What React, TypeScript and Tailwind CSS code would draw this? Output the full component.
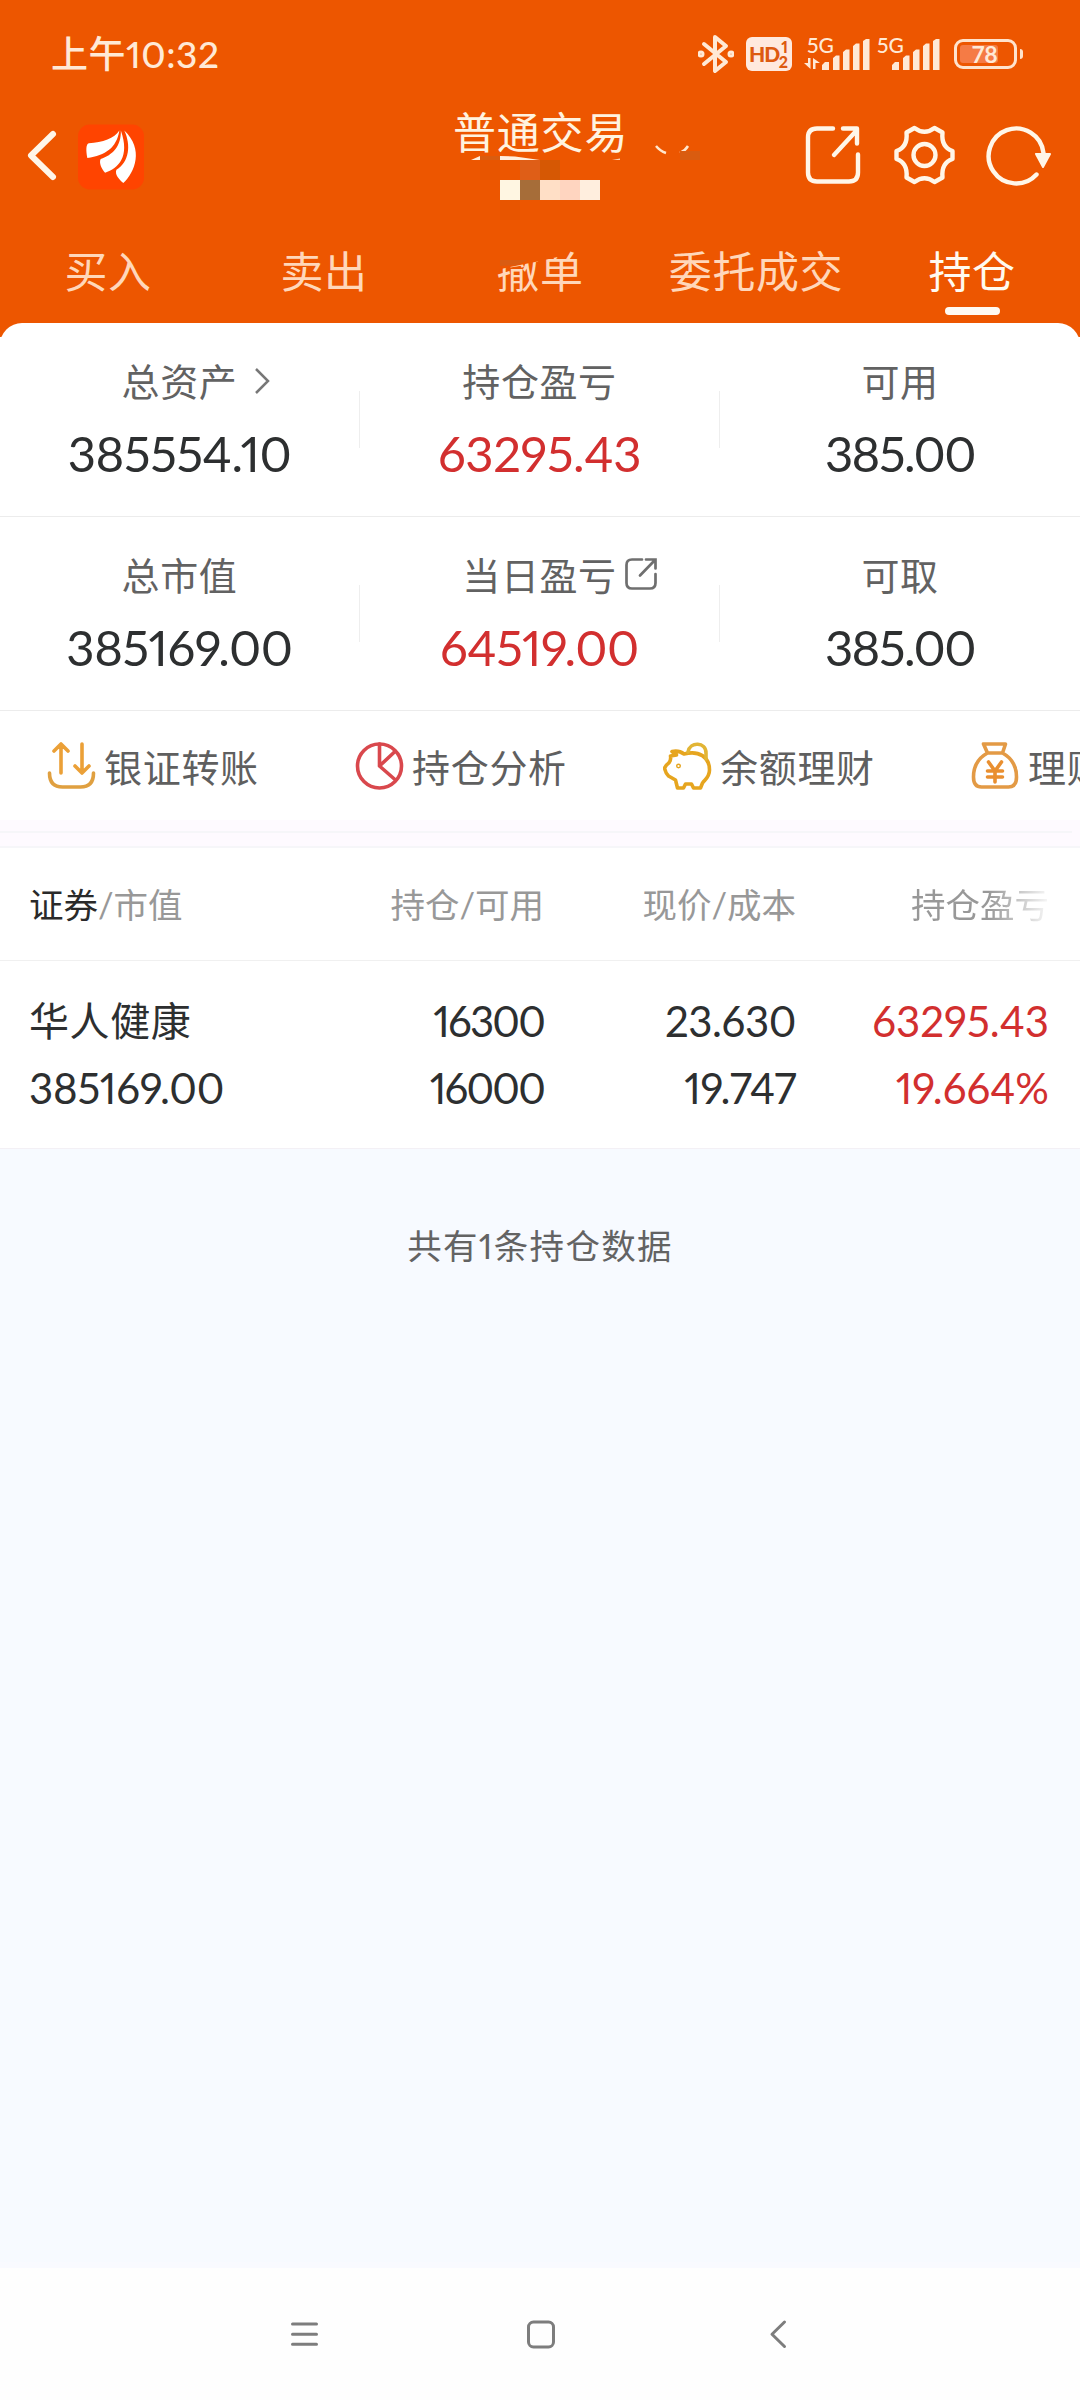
import { clsx } from 'clsx';
import type { ReactNode } from 'react';

const CREAM = '#fff6e8';

function SignalBars() {
  return (
    <svg width="48" height="31" viewBox="0 0 48 31" fill="#ffe9d6">
      <path d="M0 31v-5l3-3h4v8zM11 31V19l3-2.500h3.500V31zM21 31V13l3-2.500h3.500V31zM31 31V7l3-2.500h3.500V31zM41 31V2l3-2h3.500v31z" />
    </svg>
  );
}

function Signal({ arrows = false }: { arrows?: boolean }) {
  return (
    <div className="relative h-[36px] w-[66px]">
      <span className="absolute left-[3px] top-0 text-[21px] font-medium leading-[18px]">5G</span>
      {arrows && (
        <svg className="absolute bottom-[3px] left-0" width="16" height="11" viewBox="0 0 16 11" fill="#ffe9d6">
          <path d="M4 0h2.500v11L0 5h4zM9 0v11h2.500V5H16z" />
        </svg>
      )}
      <div className="absolute bottom-[2px] left-[18px]">
        <SignalBars />
      </div>
    </div>
  );
}

function StatusBar() {
  return (
    <div className="flex h-[108px] items-center pl-[51px] pr-[57px] text-[#ffe9d6]">
      <span className="text-[37px] font-medium leading-[40px] tracking-[0.5px]">上午10:32</span>
      <svg className="ml-auto" width="36" height="40" viewBox="0 0 36 40" fill="none" stroke="#ffe9d6" strokeWidth="4" strokeLinejoin="round" strokeLinecap="round">
        <path d="M6 10l22 18-11 9V3l11 9L6 30" />
        <circle cx="3" cy="20" r="1.500" />
        <circle cx="33" cy="20" r="1.500" />
      </svg>
      <div className="relative ml-[12px] h-[34px] w-[46px] rounded-[6px] bg-[#ffe9de] text-[#dd5a10]">
        <span className="absolute left-[3px] top-[8px] text-[21px] font-black leading-[18px] tracking-[-1px]">HD</span>
        <span className="absolute right-[4px] top-[3px] text-[16px] font-black leading-[14px]">1</span>
        <span className="absolute bottom-[2px] right-[4px] text-[16px] font-black leading-[14px]">2</span>
      </div>
      <div className="ml-[12px] flex gap-[4px]">
        <Signal arrows />
        <Signal />
      </div>
      <div className="ml-[14px] flex h-[30px] w-[63px] rounded-[9px] border-[3px] border-[#ffe3cc] p-[3px]">
        <div className="flex w-[38px] items-center rounded-[3px] bg-[#f57b45] pl-[12px] text-[23px] font-bold leading-[18px]">
          78
        </div>
      </div>
      <div className="ml-[3px] h-[10px] w-[3px] rounded-r-[3px] bg-[#ffe3cc]" />
    </div>
  );
}

function TitleBar() {
  return (
    <div className="relative flex h-[107px] items-start">
      <svg className="ml-[24px] mt-[20px]" width="36" height="54" viewBox="0 0 36 54" fill="none" stroke={CREAM} strokeWidth="6" strokeLinecap="round" strokeLinejoin="round">
        <path d="M29 6L7 27.500 29 49" />
      </svg>
      <svg className="ml-[18px] mt-[16px]" width="66" height="66" viewBox="0 0 67 66">
        <rect width="67" height="66" rx="12" fill="#ff4400" />
        <g fill="#fff">
          <path d="M42 6C37 14 25 18 11 19C8 20 8 26 9.500 34C28 31 39 24 42 6z" />
          <path d="M43.500 6C44 22 35 31 23 35C21 39 24 45 27.500 49C41 44 53 33 43.500 6z" />
          <path d="M47 6C54 21 52 38 39 46C37 51 42 56 46 59.500C58 48 67 25 47 6z" />
        </g>
      </svg>
      <span className="absolute left-[453px] top-[1px] text-[43px] leading-[48px] tracking-[0.8px] text-[#fff3e0]">普通交易</span>
      {/* account switcher with the number pixelated out */}
      <svg className="absolute left-[470px] top-[36px]" width="232" height="90" viewBox="470 144 232 90">
        <path d="M656 146q4 5 10 7M680 153q5-2 8-7" fill="none" stroke="#ffe6cc" strokeWidth="2.500" />
        <path d="M680 151h20v9h-20zM480 156h20v4h-20z" fill="#d95c10" />
        <path d="M471 160l9-4v4zM500 156l15 .5 25 3.500h-40z" fill="#fff0df" />
        <path d="M612 160l8-1.500v1.500z" fill="#ffd0b0" />
        <path d="M480 160h20v20h-20zM500 200h20v20h-20z" fill="#e85500" />
        <path d="M520 160h20v20h-20z" fill="#df5e17" />
        <path d="M540 160h20v20h-20z" fill="#d65804" />
        <path d="M500 180h20v20h-20z" fill="#fff6e2" />
        <path d="M520 180h20v20h-20z" fill="#a66d39" />
        <path d="M540 180h20v20h-20z" fill="#ffdfc6" />
        <path d="M560 180h20v20h-20z" fill="#ffd5c0" />
        <path d="M580 180h20v20h-20z" fill="#ffeede" />
      </svg>
      <svg className="ml-auto mr-[24px] mt-[12px]" width="252" height="70" viewBox="804 120 252 70" fill="none" stroke={CREAM} strokeWidth="4.400" strokeLinecap="round" strokeLinejoin="round">
        <path d="M833 128.500h-16q-9 0-9 9v35q0 9 9 9h32q9 0 9-9v-18M843 128.500h14v15M857 130l-23 25" />
        <circle cx="924.500" cy="155" r="11" />
        <path d="M914.500 128q10 7.500 20 0l8 4.500q-1.500 14.500 10 18.500v8q-11.500 4-10 18.500l-8 4.500q-10-7.500-20 0l-8-4.500q1.500-14.500-10-18.500v-8q11.500-4 10-18.500z" />
        <path d="M1036.500 174.500A27.500 27.500 0 1 1 1043.500 153" />
        <path d="M1036 154h14l-7 13z" fill={CREAM} strokeWidth="2" />
      </svg>
    </div>
  );
}

const tabs = ['买入', '卖出', '撤单', '委托成交', '持仓'];

function Tabs() {
  return (
    <div className="grid h-[108px] grid-cols-5 pt-[32px]">
      {tabs.map((tab) => (
        <div
          key={tab}
          className={clsx(
            'relative flex flex-col items-center text-[43px] leading-[50px] tracking-[0.6px]',
            tab === '持仓' ? 'text-[#fffaf0]' : 'text-[#ffd7ba]',
          )}
        >
          {tab}
          {tab === '持仓' && <div className="mt-[10px] h-[8px] w-[55px] rounded-full bg-[#fffaf3]" />}
          {/* smear left over the top of the label */}
          {tab === '撤单' && (
            <svg className="absolute left-[60px] top-0" width="80" height="24" viewBox="492 247 80 24">
              <path d="M492 247h70v9l-22 5-30 6-18 4z" fill="#ed5600" />
              <path d="M500 260h28l-10 5-18 1z" fill="#d95c12" />
            </svg>
          )}
        </div>
      ))}
    </div>
  );
}

interface StatProps {
  label: string;
  value: string;
  red?: boolean;
  icon?: ReactNode;
}

function Stat({ label, value, red, icon }: StatProps) {
  return (
    <div className="flex flex-col items-center pt-[34px]">
      <div className="relative text-[38px] leading-[48px] tracking-[0.6px] text-[#626262]">
        {label}
        {icon}
      </div>
      <div
        className={clsx(
          'mt-[18px] text-[49px] leading-[60px]',
          value === '385.00' ? 'tracking-[-1.5px]' : 'tracking-[-0.4px]',
          red ? 'text-[#d22f2f]' : 'text-[#2d2f30]',
        )}
      >
        {value}
      </div>
    </div>
  );
}

function StatRow({ stats }: { stats: StatProps[] }) {
  return (
    <div className="grid h-[194px] grid-cols-[359px_1px_359px_1px_360px] border-b border-[#ececec]">
      <Stat {...stats[0]} />
      <div className="mt-[68px] h-[57px] bg-[#eeeeee]" />
      <Stat {...stats[1]} />
      <div className="mt-[68px] h-[57px] bg-[#eeeeee]" />
      <Stat {...stats[2]} />
    </div>
  );
}

const chevron = (
  <svg className="absolute left-[132px] top-[10px]" width="18" height="28" viewBox="0 0 18 28" fill="none" stroke="#777" strokeWidth="2.500">
    <path d="M2 2l12 12L2 26" />
  </svg>
);

const openIcon = (
  <svg className="absolute left-[162px] top-[6px]" width="34" height="34" viewBox="0 0 34 34" fill="none" stroke="#6f6f6f" strokeWidth="2.700" strokeLinecap="round">
    <path d="M18 2.500H8Q2.500 2.500 2.500 8v18q0 5.500 5.500 5.500h18q5.500 0 5.500-5.500V17M22 2.500h9.500v9M31 3L16 18.500" />
  </svg>
);

const actions = [
  {
    label: '银证转账',
    icon: (
      <g stroke="#e0a040">
        <path d="M14 31V3M7 9l7-7 7 7M35 2v28M28 24l7 7 7-7" stroke="#eba037" />
        <path d="M2.500 31q0 14 13 14h18q13 0 13-14" />
      </g>
    ),
  },
  {
    label: '持仓分析',
    icon: (
      <g stroke="#d9484d">
        <circle cx="24.500" cy="24" r="22" />
        <path d="M24.500 2v22l16 14M24.500 24L40 9.500" />
      </g>
    ),
  },
  {
    label: '余额理财',
    icon: (
      <g stroke="#e6a51f">
        <path d="M13.500 13L9 9.500q7-1.500 12 2.500C36 8 46.500 15 46.500 28c0 7-4 9-7 13l-2 5h-7l-2-4h-6l-2 4h-6l-2-8-7-4q-3-3-4-8l2-3q5-3 4-9z" />
        <path d="M25 10c2-11 18-10 18 1v6" stroke="#e2b535" />
        <circle cx="15.500" cy="24" r=".7" />
      </g>
    ),
  },
  {
    label: '理财',
    icon: (
      <g stroke="#e39a45">
        <path d="M12.500 2h22l-3 9h-15zM16.500 11C5.500 17 2.500 26 2.500 35q0 10 8 10h27q8 0 8-10C45.500 26 42.500 17 31.500 11" />
        <path d="M17.500 20l6.500 9 6.500-9M16.500 29h15M16.500 35h15M24 29v11" stroke="#e98f30" />
      </g>
    ),
  },
];

function Actions() {
  return (
    <div className="flex h-[109px] overflow-hidden pl-[47px]">
      {actions.map(({ label, icon }) => (
        <div key={label} className="flex w-[308px] shrink-0 pt-[31px]">
          <svg width="49" height="48" viewBox="0 0 49 48" fill="none" strokeWidth="3.600" strokeLinecap="round" strokeLinejoin="round">
            {icon}
          </svg>
          <span className="ml-[8px] whitespace-nowrap text-[38px] leading-[50px] tracking-[0.7px] text-[#5f5f5f]">{label}</span>
        </div>
      ))}
    </div>
  );
}

function Cell({ top, bottom, className }: { top: string; bottom: string; className?: string }) {
  return (
    <div className={clsx('flex flex-col text-[42px] leading-[67px]', className)}>
      <span>{top}</span>
      <span>{bottom}</span>
    </div>
  );
}

function Holdings() {
  return (
    <div>
      <div className="grid h-[113px] grid-cols-[264px_251px_252px_253px] border-b border-[#f0f0f0] pl-[29px] pt-[32px] text-[34.500px] leading-[50px] text-[#989898]">
        <div>
          <span className="text-[#2a2a2a]">证券</span>/市值
        </div>
        <div className="text-right">持仓/可用</div>
        <div className="text-right">现价/成本</div>
        <div className="bg-linear-to-r from-[#989898] from-76% to-[#f8f8f8] bg-clip-text text-right text-transparent">持仓盈亏</div>
      </div>
      <div className="grid h-[188px] grid-cols-[264px_251px_252px_253px] border-b border-[#f3f0f5] pl-[29px] pt-[27px] text-[#2d2f30]">
        <div className="flex flex-col leading-[67px]">
          <span className="text-[40px] tracking-[0.6px]">华人健康</span>
          <span className="text-[42px] tracking-[-0.2px]">385169.00</span>
        </div>
        <Cell top="16300" bottom="16000" className="items-end tracking-[-1.800px]" />
        <Cell top="23.630" bottom="19.747" className="items-end tracking-[-0.4px]" />
        <Cell top="63295.43" bottom="19.664%" className="items-end text-[#d22f2f]" />
      </div>
    </div>
  );
}

export default function App() {
  return (
    <div className="flex h-[2400px] w-[1080px] flex-col overflow-hidden bg-[#f7faff] font-['Lato','Noto_Sans_CJK_SC',sans-serif] proportional-nums">
      <header className="bg-[#ed5600]">
        <StatusBar />
        <TitleBar />
        <Tabs />
      </header>
      <div className="bg-linear-to-b from-[#ed5600] from-[14px] to-white to-[14px]">
        <div className="rounded-t-[22px] bg-white">
          <StatRow
            stats={[
              { label: '总资产', value: '385554.10', icon: chevron },
              { label: '持仓盈亏', value: '63295.43', red: true },
              { label: '可用', value: '385.00' },
            ]}
          />
          <StatRow
            stats={[
              { label: '总市值', value: '385169.00' },
              { label: '当日盈亏', value: '64519.00', red: true, icon: openIcon },
              { label: '可取', value: '385.00' },
            ]}
          />
          <Actions />
          <div className="h-[28px] border-b-2 border-[#f6f6f9] bg-[#fefaff] pt-[11px]">
            <div className="h-[2px] w-[1072px] bg-[#f6f6f9]" />
          </div>
          <Holdings />
        </div>
      </div>
      <p className="mt-[72px] text-center text-[34.500px] leading-[50px] tracking-[1.300px] text-[#636363]">共有1条持仓数据</p>
      <nav className="mt-auto border-t-[6px] border-[#f9faff] bg-[#fefefe]">
        <div className="flex h-[132px] items-center pl-[290px]">
          <svg width="500" height="32" viewBox="290 2318.500 500 32" fill="none" stroke="#7d7d7d" strokeWidth="3" strokeLinecap="round" strokeLinejoin="round">
            <path d="M292.500 2324.500h24M292.500 2334.700h24M292.500 2344.700h24" />
            <rect x="528.500" y="2322.500" width="25" height="25" rx="5" />
            <path d="M784.500 2322.500l-12.500 12.200 12.500 12.300" />
          </svg>
        </div>
      </nav>
    </div>
  );
}
